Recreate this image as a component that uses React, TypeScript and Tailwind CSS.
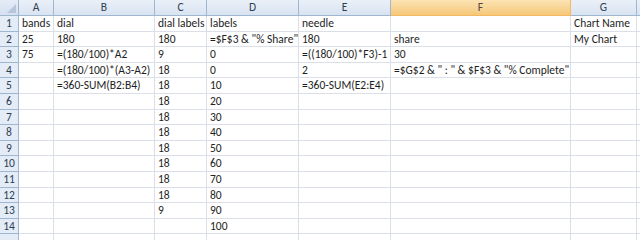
import React from "react";

const cols = [
  { key: "A", w: 35 },
  { key: "B", w: 101 },
  { key: "C", w: 52 },
  { key: "D", w: 92 },
  { key: "E", w: 92 },
  { key: "F", w: 180 },
  { key: "G", w: 66 },
  { key: "", w: 40 },
];

const data: string[][] = [
  ["bands", "dial", "dial labels", "labels", "needle", "", "Chart Name", ""],
  ["25", "180", "180", '=$F$3 & "% Share"', "180", "share", "My Chart", ""],
  ["75", "=(180/100)*A2", "9", "0", "=((180/100)*F3)-1", "30", "", ""],
  ["", "=(180/100)*(A3-A2)", "18", "0", "2", '=$G$2 & " : " & $F$3 & "% Complete"', "", ""],
  ["", "=360-SUM(B2:B4)", "18", "10", "=360-SUM(E2:E4)", "", "", ""],
  ["", "", "18", "20", "", "", "", ""],
  ["", "", "18", "30", "", "", "", ""],
  ["", "", "18", "40", "", "", "", ""],
  ["", "", "18", "50", "", "", "", ""],
  ["", "", "18", "60", "", "", "", ""],
  ["", "", "18", "70", "", "", "", ""],
  ["", "", "18", "80", "", "", "", ""],
  ["", "", "9", "90", "", "", "", ""],
  ["", "", "", "100", "", "", "", ""],
  ["", "", "", "", "", "", "", ""],
];

const font = { fontFamily: "Carlito, 'Liberation Sans Narrow', 'Liberation Sans', Arial, sans-serif" };

export default function App() {
  return (
    <div className="w-[640px] h-[240px] overflow-hidden bg-white text-[11.5px] text-[#1e1e1e]" style={font}>
      <div className="flex h-[16px]">
        <div className="relative w-[19px] shrink-0 border-r border-b border-[#9eb6ce] bg-gradient-to-b from-[#e4ecf7] to-[#d5e1f0]">
          <div className="absolute right-[2px] bottom-[2px] w-0 h-0 border-l-[9px] border-l-transparent border-b-[9px] border-b-[#b7c6da]" />
        </div>
        {cols.map((c, i) => (
          <div
            key={i}
            style={{ width: c.w }}
            className={
              c.key === "F"
                ? "shrink-0 flex items-center justify-center border-r border-b border-[#f2b962] bg-gradient-to-b from-[#fbe3b3] to-[#f6c878] text-[#4a4a4a]"
                : "shrink-0 flex items-center justify-center border-r border-b border-[#9eb6ce] bg-gradient-to-b from-[#eaf0f8] to-[#d9e3f1] text-[#2f3f52]"
            }
          >
            {c.key}
          </div>
        ))}
      </div>
      {data.map((row, r) => (
        <div key={r} className="flex h-[15.6px]">
          <div className="w-[19px] shrink-0 flex items-end justify-center pb-[1px] border-r border-b border-[#9eb6ce] bg-[#e4ecf7] text-[#2f3f52] leading-none">
            {r < 14 ? r + 1 : ""}
          </div>
          {cols.map((c, i) => (
            <div
              key={i}
              style={{ width: c.w }}
              className="shrink-0 flex items-end pl-[3px] pb-[1px] border-r border-b border-[#dadfe8] whitespace-nowrap overflow-visible leading-none"
            >
              {row[i]}
            </div>
          ))}
        </div>
      ))}
    </div>
  );
}
